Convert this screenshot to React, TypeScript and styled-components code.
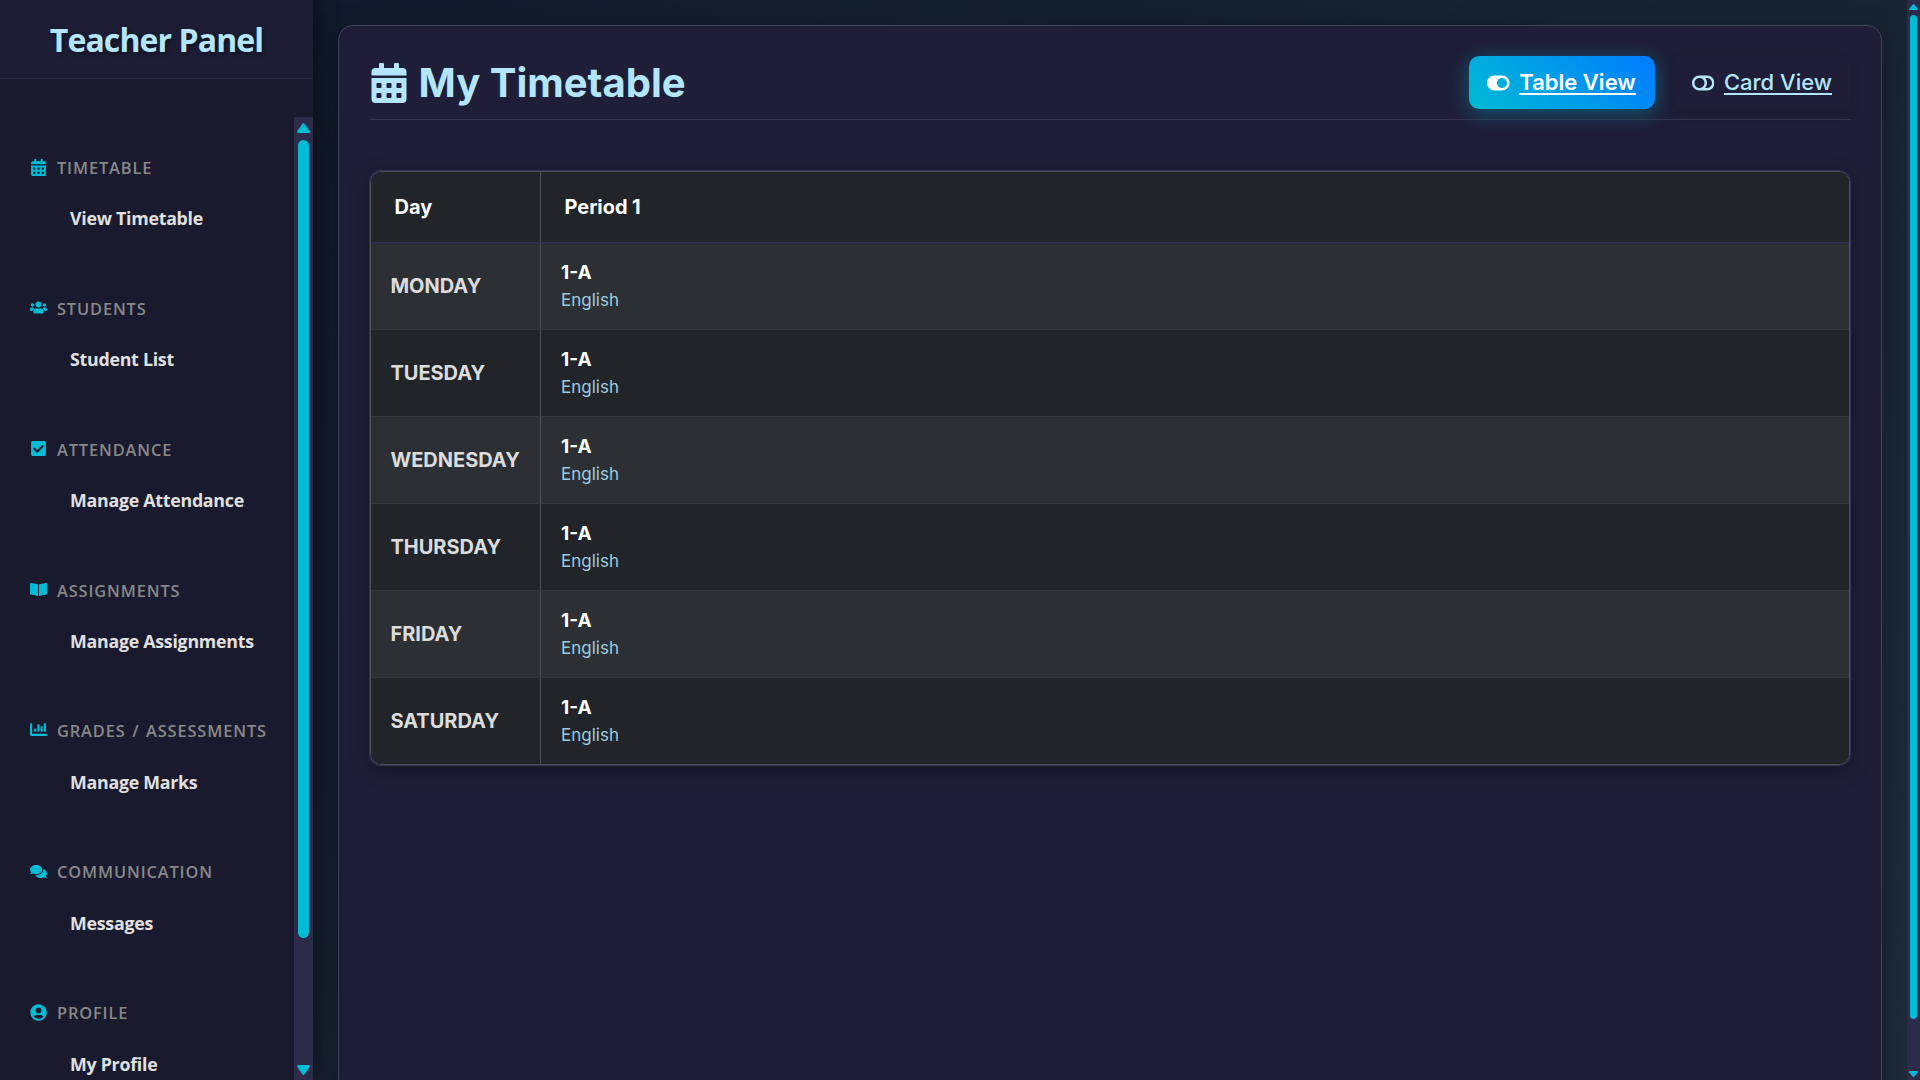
import React from "react";
import styled, { createGlobalStyle, css } from "styled-components";
import {
  FaBookOpen,
  FaCalendarAlt,
  FaChartBar,
  FaCheckSquare,
  FaComments,
  FaToggleOff,
  FaToggleOn,
  FaUserCircle,
  FaUsers,
} from "react-icons/fa";

const GlobalStyle = createGlobalStyle`
  *, *::before, *::after { box-sizing: border-box; }
  html, body { margin: 0; padding: 0; overflow: hidden; }
  body { font-family: Inter, "Liberation Sans", sans-serif; color: #fff; background: #0f1929; }
`;

const Page = styled.div`
  display: flex;
  width: 100vw;
  height: 100vh;
  overflow: hidden;
  background: linear-gradient(135deg, #0f182a 0%, #1e2b3b 100%);
`;

const Sidebar = styled.aside`
  flex: 0 0 313px;
  display: flex;
  flex-direction: column;
  height: 100%;
  background: #1a1a2e;
  box-shadow: 4px 0 20px rgba(0, 0, 0, 0.4);
  font-family: "Open Sans", "Noto Sans", sans-serif;
  z-index: 1;
`;

const Brand = styled.div`
  flex: 0 0 79px;
  height: 79px;
  display: flex;
  justify-content: center;
  background: #1c1d35;
  border-bottom: 1px solid #2d2d4b;
  font-size: 32px;
  line-height: 80px;
  font-weight: 700;
  letter-spacing: -0.9px;
  color: #b3e5fc;
  text-shadow: 2px 2px 4px rgba(0, 0, 0, 0.4);
  white-space: nowrap;
`;

const SideBody = styled.div`
  flex: 1;
  min-height: 0;
  display: flex;
  margin-top: 38px;
`;

const Nav = styled.nav`
  flex: 1;
  min-width: 0;
  overflow: hidden;
  padding-top: 35px;
`;

const Group = styled.section`
  height: 141px;
  padding-left: 30px;
`;

const GroupTitle = styled.h3<{ $lift: number; $raise: number }>`
  display: flex;
  align-items: center;
  gap: 10px;
  margin: 0;
  height: 30px;
  padding-bottom: ${(p) => p.$raise}px;
  font-size: 16.4px;
  font-weight: 600;
  letter-spacing: 0.86px;
  word-spacing: 1.5px;
  color: #888;
  text-transform: uppercase;
  white-space: nowrap;

  svg {
    width: 17px;
    height: 17px;
    margin-bottom: ${(p) => p.$lift}px;
    color: #00bcd4;
  }
`;

const NavLink = styled.a`
  display: block;
  margin: 20px 0 0 40px;
  height: 32px;
  line-height: 32px;
  font-size: 17.8px;
  font-weight: 700;
  letter-spacing: -0.26px;
  color: #e0e0e0;
  white-space: nowrap;
`;

const Track = styled.div<{ $wide?: boolean }>`
  flex: 0 0 ${(p) => (p.$wide ? 19 : 13)}px;
  display: flex;
  flex-direction: column;
  align-items: center;
  background: #2c2c4a;
  padding: ${(p) => (p.$wide ? "6px 0 5px" : "4px 0 3px")};
`;

const Thumb = styled.div<{ $w: number; $top: number; $h: number }>`
  width: ${(p) => p.$w}px;
  height: ${(p) => p.$h}px;
  margin-top: ${(p) => p.$top}px;
  border-radius: 10px;
  background: #00bcd4;
`;

const Arrow = styled.svg<{ $down?: boolean }>`
  display: block;
  fill: #00bcd4;
  ${(p) => p.$down && css`margin-top: auto; transform: rotate(180deg);`}
`;

const Main = styled.main`
  flex: 1;
  min-width: 0;
  padding: 25px 25px 0;
  overflow: hidden;
`;

const Panel = styled.div`
  height: 1200px;
  padding: 30px 30px 0;
  background: #1e1e38;
  border: 1px solid #44435e;
  border-radius: 15px;
  box-shadow: 0 8px 30px rgba(0, 0, 0, 0.3);
`;

const PanelHead = styled.header`
  display: flex;
  justify-content: space-between;
  align-items: flex-start;
  height: 64px;
  border-bottom: 1px solid #35354f;
`;

const Title = styled.h1`
  display: flex;
  align-items: center;
  gap: 9.5px;
  margin: 0;
  height: 54px;
  font-size: 40px;
  font-weight: 700;
  color: #b3e5fc;
  white-space: nowrap;
  svg { width: 40px; height: 40px; }
  span { padding-bottom: 2px; }
`;

const Views = styled.div`
  display: flex;
  gap: 18px;
`;

const ViewButton = styled.a<{ $active?: boolean }>`
  display: flex;
  align-items: center;
  gap: 9.6px;
  height: 53px;
  padding: 0 19px;
  border-radius: 10px;
  font-size: 22px;
  font-weight: 500;
  color: #b3e5fc;
  white-space: nowrap;
  box-shadow: 0 4px 12px rgba(0, 0, 0, 0.1);
  span {
    padding-bottom: 2px;
    text-decoration: underline;
    text-decoration-thickness: 2px;
    text-underline-offset: 3px;
  }
  svg { width: 22.5px; height: 22px; }
  ${(p) =>
    p.$active &&
    css`
      padding-left: 18.2px;
      font-weight: 600;
      color: #fff;
      background: linear-gradient(45deg, #00bcd4, #007bff);
      box-shadow: 0 4px 20px rgba(0, 188, 212, 0.4);
    `}
`;

const TableWrap = styled.div`
  margin-top: 50px;
  border: 1px solid #33335a;
  border-radius: 12px;
  overflow: hidden;
  box-shadow: 0 5px 20px rgba(0, 0, 0, 0.3);
`;

const Table = styled.div`
  display: grid;
  border: 1px solid #4d5154;
  border-radius: 11px;
  overflow: hidden;
`;

const Row = styled.div<{ $head?: boolean; $odd?: boolean }>`
  display: grid;
  grid-template-columns: 169px 1fr;
  height: ${(p) => (p.$head ? 71 : 87)}px;
  background: ${(p) => (p.$odd ? "#2c3034" : "#212529")};
  border-bottom: 1px solid ${(p) => (p.$head ? "#30305a" : "#34373b")};
  &:last-child { border-bottom: 0; height: 86px; }
`;

const HeadCell = styled.div`
  display: flex;
  align-items: center;
  padding-left: 23.6px;
  font-size: 20px;
  font-weight: 700;
  letter-spacing: -0.08px;
  & + & { border-left: 1px solid #4d5154; }
`;

const DayCell = styled.div`
  display: flex;
  align-items: center;
  padding-left: 19.4px;
  font-size: 20px;
  font-weight: 700;
  color: #dcdcdc;
`;

const PeriodCell = styled.div`
  display: flex;
  flex-direction: column;
  padding: 16px 0 0 20px;
  border-left: 1px solid #4d5154;
`;

const ClassName = styled.div`
  font-size: 19px;
  line-height: 28px;
  font-weight: 700;
`;

const Subject = styled.div`
  font-size: 17px;
  line-height: 27px;
  color: #9ccbe0;
`;

const groups = [
  { icon: FaCalendarAlt, title: "Timetable", link: "View Timetable", lift: 0, raise: 0 },
  { icon: FaUsers, title: "Students", link: "Student List", lift: 2, raise: 0 },
  { icon: FaCheckSquare, title: "Attendance", link: "Manage Attendance", lift: 2, raise: 0 },
  { icon: FaBookOpen, title: "Assignments", link: "Manage Assignments", lift: 2, raise: 0 },
  { icon: FaChartBar, title: "Grades / Assessments", link: "Manage Marks", lift: 1, raise: 2 },
  { icon: FaComments, title: "Communication", link: "Messages", lift: 0, raise: 2 },
  { icon: FaUserCircle, title: "Profile", link: "My Profile", lift: 0, raise: 2 },
];

const days = ["MONDAY", "TUESDAY", "WEDNESDAY", "THURSDAY", "FRIDAY", "SATURDAY"];

function ScrollArrow({ w, h, down }: { w: number; h: number; down?: boolean }) {
  return (
    <Arrow $down={down} width={w} height={h} viewBox="0 0 13 10" preserveAspectRatio="none">
      <path d="M5.6 0.6Q6.5-.4 7.4.6L12.7 8Q13.4 10 11.6 10H1.4Q-.4 10 .3 8Z" />
    </Arrow>
  );
}

export default function App() {
  return (
    <Page>
      <GlobalStyle />
      <Sidebar>
        <Brand>Teacher Panel</Brand>
        <SideBody>
          <Nav>
            {groups.map(({ icon: Icon, title, link, lift, raise }) => (
              <Group key={title}>
                <GroupTitle $lift={lift} $raise={raise}>
                  <Icon />
                  {title}
                </GroupTitle>
                <NavLink>{link}</NavLink>
              </Group>
            ))}
          </Nav>
          <Track $wide>
            <ScrollArrow w={13} h={10} />
            <Thumb $w={11} $top={7} $h={798} />
            <ScrollArrow w={13} h={10} down />
          </Track>
        </SideBody>
      </Sidebar>
      <Main>
        <Panel>
          <PanelHead>
            <Title>
              <FaCalendarAlt />
              <span>My Timetable</span>
            </Title>
            <Views>
              <ViewButton $active>
                <FaToggleOn />
                <span>Table View</span>
              </ViewButton>
              <ViewButton>
                <FaToggleOff />
                <span>Card View</span>
              </ViewButton>
            </Views>
          </PanelHead>
          <TableWrap>
            <Table>
              <Row $head>
                <HeadCell>Day</HeadCell>
                <HeadCell>Period 1</HeadCell>
              </Row>
              {days.map((day, i) => (
                <Row key={day} $odd={i % 2 === 0}>
                  <DayCell>{day}</DayCell>
                  <PeriodCell>
                    <ClassName>1-A</ClassName>
                    <Subject>English</Subject>
                  </PeriodCell>
                </Row>
              ))}
            </Table>
          </TableWrap>
        </Panel>
      </Main>
      <Track>
        <ScrollArrow w={9} h={6} />
        <Thumb $w={7} $top={5} $h={1004} />
        <ScrollArrow w={9} h={6} down />
      </Track>
    </Page>
  );
}
